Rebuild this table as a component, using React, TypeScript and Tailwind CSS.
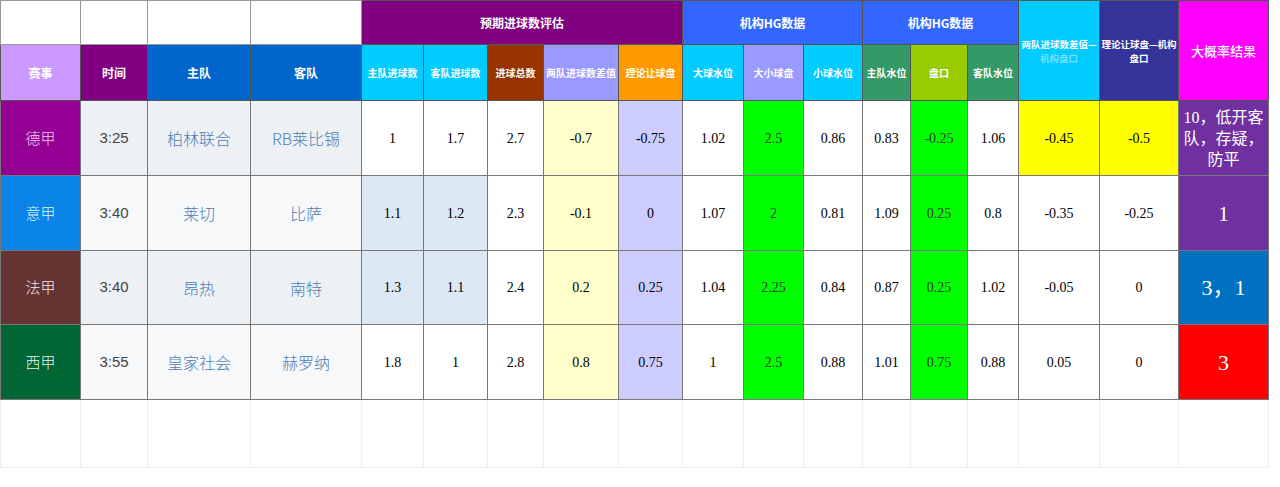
import React from "react";

const CJK = "font-['Noto_Sans_CJK_SC','Noto_Sans',sans-serif]";
const SERIF = "font-['Liberation_Serif','Noto_Sans_CJK_SC',serif]";

const widths = [
  "w-[80px]", "w-[67px]", "w-[103px]", "w-[111px]", "w-[62px]", "w-[64px]", "w-[56px]", "w-[75px]", "w-[64px]",
  "w-[61px]", "w-[60px]", "w-[59px]", "w-[48px]", "w-[57px]", "w-[51px]", "w-[81px]", "w-[79px]", "w-[90px]",
];

type Row = {
  league: string;
  leagueBg: string;
  leagueText: string;
  time: string;
  home: string;
  away: string;
  bg: string;
  nums: string[];
  result: string;
  resultBg: string;
  resultSize: string;
};

const rows: Row[] = [
  {
    league: "德甲", leagueBg: "bg-[#930093]", leagueText: "text-[#f7cdf2]", time: "3:25", home: "柏林联合", away: "RB莱比锡",
    bg: "bg-[#eef1f4]",
    nums: ["1", "1.7", "2.7", "-0.7", "-0.75", "1.02", "2.5", "0.86", "0.83", "-0.25", "1.06", "-0.45", "-0.5"],
    result: "10，低开客队，存疑，防平", resultBg: "bg-[#7030a0]", resultSize: "text-[16px] leading-[21px]",
  },
  {
    league: "意甲", leagueBg: "bg-[#0a84e6]", leagueText: "text-[#dff4ff]", time: "3:40", home: "莱切", away: "比萨",
    bg: "bg-[#f6f8fa]",
    nums: ["1.1", "1.2", "2.3", "-0.1", "0", "1.07", "2", "0.81", "1.09", "0.25", "0.8", "-0.35", "-0.25"],
    result: "1", resultBg: "bg-[#7030a0]", resultSize: "text-[22px]",
  },
  {
    league: "法甲", leagueBg: "bg-[#663333]", leagueText: "text-[#f5e6e6]", time: "3:40", home: "昂热", away: "南特",
    bg: "bg-[#eef1f4]",
    nums: ["1.3", "1.1", "2.4", "0.2", "0.25", "1.04", "2.25", "0.84", "0.87", "0.25", "1.02", "-0.05", "0"],
    result: "3，1", resultBg: "bg-[#0070c0]", resultSize: "text-[22px]",
  },
  {
    league: "西甲", leagueBg: "bg-[#006633]", leagueText: "text-[#e6f5ea]", time: "3:55", home: "皇家社会", away: "赫罗纳",
    bg: "bg-[#f6f8fa]",
    nums: ["1.8", "1", "2.8", "0.8", "0.75", "1", "2.5", "0.88", "1.01", "0.75", "0.88", "0.05", "0"],
    result: "3", resultBg: "bg-[#ff0000]", resultSize: "text-[22px]",
  },
];

function numBg(col: number, row: number): string {
  if ((col === 0 || col === 1) && (row === 1 || row === 2)) return "bg-[#dce9f5]";
  if (col === 3) return "bg-[#ffffcc]";
  if (col === 4) return "bg-[#ccccff]";
  if (col === 6 || col === 9) return "bg-[#00ff00]";
  if ((col === 11 || col === 12) && row === 0) return "bg-[#ffff00]";
  return "bg-white";
}

const subHeaders: { t: string; bg: string }[] = [
  { t: "主队进球数", bg: "bg-[#00ccff]" },
  { t: "客队进球数", bg: "bg-[#00ccff]" },
  { t: "进球总数", bg: "bg-[#993300]" },
  { t: "两队进球数差值", bg: "bg-[#9999ff]" },
  { t: "理论让球盘", bg: "bg-[#ff9900]" },
  { t: "大球水位", bg: "bg-[#00ccff]" },
  { t: "大小球盘", bg: "bg-[#9999ff]" },
  { t: "小球水位", bg: "bg-[#00ccff]" },
  { t: "主队水位", bg: "bg-[#339966]" },
  { t: "盘口", bg: "bg-[#99cc00]" },
  { t: "客队水位", bg: "bg-[#339966]" },
];

export default function App() {
  const hb = "border border-[#555] text-white text-center align-middle p-0";
  const db = "border border-[#777] text-center align-middle p-0";
  return (
    <div className="w-[1280px] h-[487px] bg-white overflow-hidden">
      <table className="table-fixed border-collapse w-[1268px]">
        <colgroup>
          {widths.map((w, i) => (
            <col key={i} className={w} />
          ))}
        </colgroup>
        <thead>
          <tr className="h-[44px]">
            <td className="border border-[#999] bg-white" />
            <td className="border border-[#999] bg-white" />
            <td className="border border-[#999] bg-white" />
            <td className="border border-[#999] bg-white" />
            <th colSpan={5} className={`${hb} bg-[#800080] ${CJK} text-[12px] font-semibold`}>预期进球数评估</th>
            <th colSpan={3} className={`${hb} bg-[#3366ff] ${CJK} text-[12px] font-semibold`}>机构HG数据</th>
            <th colSpan={3} className={`${hb} bg-[#3366ff] ${CJK} text-[12px] font-semibold`}>机构HG数据</th>
            <th rowSpan={2} className={`${hb} bg-[#00ccff] ${CJK} text-[9.5px] leading-[14px] font-semibold`}>
              <span className="block whitespace-nowrap">两队进球数差值—</span>
              <span className="block whitespace-nowrap text-white/45">机构盘口</span>
            </th>
            <th rowSpan={2} className={`${hb} bg-[#333399] ${CJK} text-[9.5px] leading-[14px] font-semibold`}>
              <span className="block whitespace-nowrap">理论让球盘—机构</span>
              <span className="block whitespace-nowrap">盘口</span>
            </th>
            <th rowSpan={2} className={`${hb} bg-[#ff00ff] ${CJK} text-[13px] font-medium`}>大概率结果</th>
          </tr>
          <tr className="h-[56px]">
            <th className={`${hb} bg-[#cc99ff] ${CJK} text-[12px] font-semibold`}>赛事</th>
            <th className={`${hb} bg-[#800080] ${CJK} text-[12px] font-semibold`}>时间</th>
            <th className={`${hb} bg-[#0066cc] ${CJK} text-[12px] font-semibold`}>主队</th>
            <th className={`${hb} bg-[#0066cc] ${CJK} text-[12px] font-semibold`}>客队</th>
            {subHeaders.map((h, i) => (
              <th key={i} className={`${hb} ${h.bg} ${CJK} text-[10px] font-semibold whitespace-nowrap`}>
                {h.t}
              </th>
            ))}
          </tr>
        </thead>
        <tbody>
          {rows.map((r, ri) => (
            <tr key={ri} className={ri === 2 ? "h-[74px]" : "h-[75px]"}>
              <td className={`${db} ${r.leagueBg} ${r.leagueText} ${CJK} font-light text-[15px]`}>{r.league}</td>
              <td className={`${db} ${r.bg} text-[#444] font-['Liberation_Sans',sans-serif] text-[15px]`}>{r.time}</td>
              <td className={`${db} ${r.bg} text-[#4d7db3] ${CJK} font-light text-[16px]`}>{r.home}</td>
              <td className={`${db} ${r.bg} text-[#4d7db3] ${CJK} font-light text-[16px]`}>{r.away}</td>
              {r.nums.map((n, ci) => (
                <td
                  key={ci}
                  className={`${db} ${numBg(ci, ri)} ${SERIF} text-[14px] ${ci === 6 || ci === 9 ? "text-[#2c3d2c]" : "text-black"}`}
                >
                  {n}
                </td>
              ))}
              <td className={`${db} ${r.resultBg} text-white ${SERIF} ${r.resultSize} px-[1px]`}>{r.result}</td>
            </tr>
          ))}
          <tr className="h-[68px]">
            {widths.map((_, i) => (
              <td key={i} className="border border-[#eeeeee] bg-white" />
            ))}
          </tr>
        </tbody>
      </table>
    </div>
  );
}
